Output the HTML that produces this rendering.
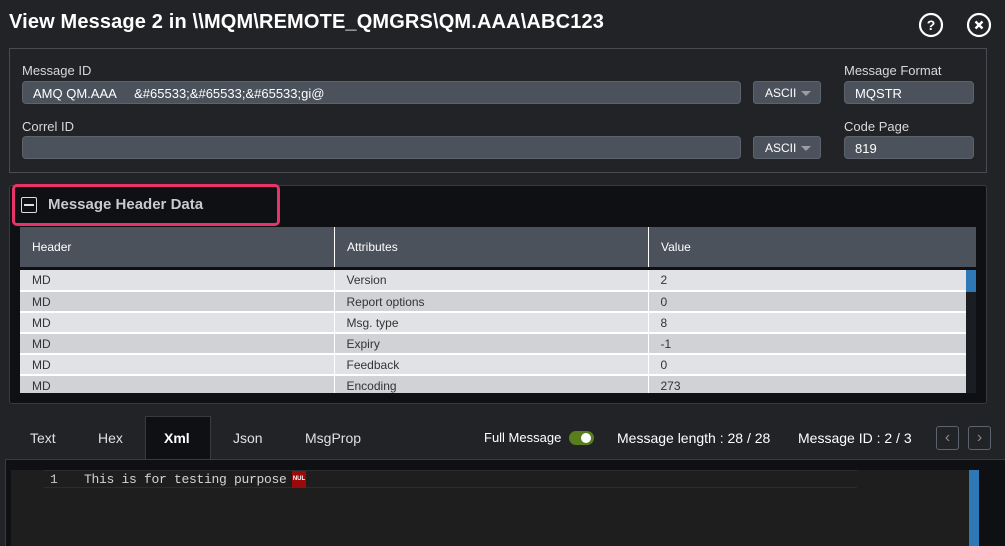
<!DOCTYPE html>
<html><head><meta charset="utf-8"><style>
*{box-sizing:border-box;margin:0;padding:0}
body{width:1005px;height:546px;background:#222327;font-family:"Liberation Sans",sans-serif;color:#e6e6e6;position:relative;overflow:hidden}
.a{position:absolute}
.lbl{font-size:13px;color:#d8d8d8}
.inp{background:#4c525b;border:1px solid #5d636c;border-radius:4px;font-size:13px;color:#fff;padding:4px 10px;height:23px}
.sel{background:#4c525b;border:1px solid #5d636c;border-radius:3px;font-size:12px;color:#fff;height:23px;padding:4px 0 0 11px}
.sel:after{content:"";position:absolute;left:47px;top:9px;border:5px solid transparent;border-top:5px solid #9a9ea4;border-bottom:0}
table{border-collapse:collapse;font-size:12px;width:946px}
td{height:21px;padding:0 12px;color:#333;border-left:1px solid #fff;border-bottom:2px solid #fff;font-size:12px}
td:first-child{border-left:0}
tr:nth-child(odd) td{background:#e1e2e5}
tr:nth-child(even) td{background:#d0d2d6}
.tab{font-size:14px;color:#e0e0e0;top:430px}
</style></head><body>
<div class="a" style="left:9px;top:11px;font-size:20px;font-weight:bold;color:#fff;letter-spacing:0.15px">View Message 2 in \\MQM\REMOTE_QMGRS\QM.AAA\ABC123</div>
<svg class="a" style="left:918px;top:12px" width="26" height="26"><circle cx="13" cy="13" r="11" fill="none" stroke="#fff" stroke-width="2.2"/><text x="13" y="18" text-anchor="middle" font-size="14" font-weight="bold" fill="#fff" font-family="Liberation Sans">?</text></svg>
<svg class="a" style="left:966px;top:12px" width="26" height="26"><circle cx="13" cy="13" r="11" fill="none" stroke="#fff" stroke-width="2.2"/><path d="M9.5 9.5l7 7M16.5 9.5l-7 7" stroke="#fff" stroke-width="2.4"/></svg>

<div class="a" style="left:9px;top:48px;width:978px;height:125px;border:1px solid #4a4b50"></div>
<div class="a lbl" style="left:22px;top:63px">Message ID</div>
<div class="a inp" style="left:22px;top:81px;width:719px">AMQ QM.AAA &nbsp;&nbsp;&nbsp;&nbsp;&amp;#65533;&amp;#65533;&amp;#65533;gi@</div>
<div class="a sel" style="left:753px;top:81px;width:68px">ASCII</div>
<div class="a lbl" style="left:844px;top:63px">Message Format</div>
<div class="a inp" style="left:844px;top:81px;width:130px">MQSTR</div>
<div class="a lbl" style="left:22px;top:119px">Correl ID</div>
<div class="a inp" style="left:22px;top:136px;width:719px"></div>
<div class="a sel" style="left:753px;top:136px;width:68px">ASCII</div>
<div class="a lbl" style="left:844px;top:119px">Code Page</div>
<div class="a inp" style="left:844px;top:136px;width:130px">819</div>

<div class="a" style="left:9px;top:185px;width:978px;height:219px;background:#0f1013;border:1px solid #3a3b40;border-radius:3px"></div>
<div class="a" style="left:12px;top:184px;width:268px;height:42px;border:3px solid #e8336a;border-radius:5px"></div>
<div class="a" style="left:21px;top:197px;width:16px;height:16px;border:1.5px solid #ddd;border-radius:2px"></div>
<div class="a" style="left:24px;top:204px;width:10px;height:2px;background:#ddd"></div>
<div class="a" style="left:48px;top:196px;font-size:15px;font-weight:bold;color:#c8cad0">Message Header Data</div>
<div class="a" style="left:20px;top:227px;width:956px;height:40px;background:#4b525c"></div>
<div class="a" style="left:334px;top:227px;width:1px;height:40px;background:#fff"></div>
<div class="a" style="left:648px;top:227px;width:1px;height:40px;background:#fff"></div>
<div class="a" style="left:32px;top:240px;font-size:12px;color:#fff">Header</div>
<div class="a" style="left:347px;top:240px;font-size:12px;color:#fff">Attributes</div>
<div class="a" style="left:661px;top:240px;font-size:12px;color:#fff">Value</div>
<div class="a" style="left:20px;top:270px;height:123px;overflow:hidden">
<table><colgroup><col style="width:314px"><col style="width:314px"><col></colgroup>
<tr><td>MD</td><td>Version</td><td>2</td></tr>
<tr><td>MD</td><td>Report options</td><td>0</td></tr>
<tr><td>MD</td><td>Msg. type</td><td>8</td></tr>
<tr><td>MD</td><td>Expiry</td><td>-1</td></tr>
<tr><td>MD</td><td>Feedback</td><td>0</td></tr>
<tr><td>MD</td><td>Encoding</td><td>273</td></tr>
</table></div>
<div class="a" style="left:966px;top:270px;width:10px;height:123px;background:#1a1d22"></div>
<div class="a" style="left:966px;top:270px;width:10px;height:22px;background:#2e78b5"></div>

<div class="a tab" style="left:30px">Text</div>
<div class="a tab" style="left:98px">Hex</div>
<div class="a" style="left:145px;top:416px;width:66px;height:44px;background:#0f1013;border:1px solid #3a3b40;border-bottom:0"></div>
<div class="a tab" style="left:164px;font-weight:bold;color:#fff">Xml</div>
<div class="a tab" style="left:233px">Json</div>
<div class="a tab" style="left:305px">MsgProp</div>
<div class="a" style="left:484px;top:430px;font-size:13px;color:#fff">Full Message</div>
<div class="a" style="left:569px;top:431px;width:25px;height:14px;border-radius:7px;background:#5a7d1e"></div>
<div class="a" style="left:581px;top:433px;width:10px;height:10px;border-radius:5px;background:#fff"></div>
<div class="a" style="left:617px;top:430px;font-size:14px;color:#fff">Message length : 28 / 28</div>
<div class="a" style="left:798px;top:430px;font-size:14px;color:#fff">Message ID : 2 / 3</div>
<div class="a" style="left:936px;top:426px;width:23px;height:24px;border:1px solid #5d636c;border-radius:3px;color:#888;font-size:16px;text-align:center;line-height:21px">&#x2039;</div>
<div class="a" style="left:968px;top:426px;width:23px;height:24px;border:1px solid #5d636c;border-radius:3px;color:#888;font-size:16px;text-align:center;line-height:21px">&#x203A;</div>

<div class="a" style="left:5px;top:459px;width:1000px;height:87px;background:#0f1013;border-top:1px solid #3a3b40;border-left:1px solid #3a3b40"></div>
<div class="a" style="left:11px;top:470px;width:968px;height:76px;background:#1e1e1e"></div>
<div class="a" style="left:44px;top:470px;width:813px;height:18px;border-top:1px solid #2c2c2c;border-bottom:1px solid #2c2c2c"></div>
<div class="a" style="left:50px;top:472px;font-family:'Liberation Mono',monospace;font-size:13px;color:#c8c8c8">1</div>
<div class="a" style="left:84px;top:472px;font-family:'Liberation Mono',monospace;font-size:13px;color:#d4d4d4;letter-spacing:-0.3px">This is for testing purpose</div>
<div class="a" style="left:292px;top:471px;width:14px;height:17px;background:#9b0a0a;color:#fff;font-size:6px;font-weight:bold;line-height:17px;text-align:center">NUL</div>
<div class="a" style="left:969px;top:470px;width:10px;height:76px;background:#2e78b5"></div>
</body></html>
